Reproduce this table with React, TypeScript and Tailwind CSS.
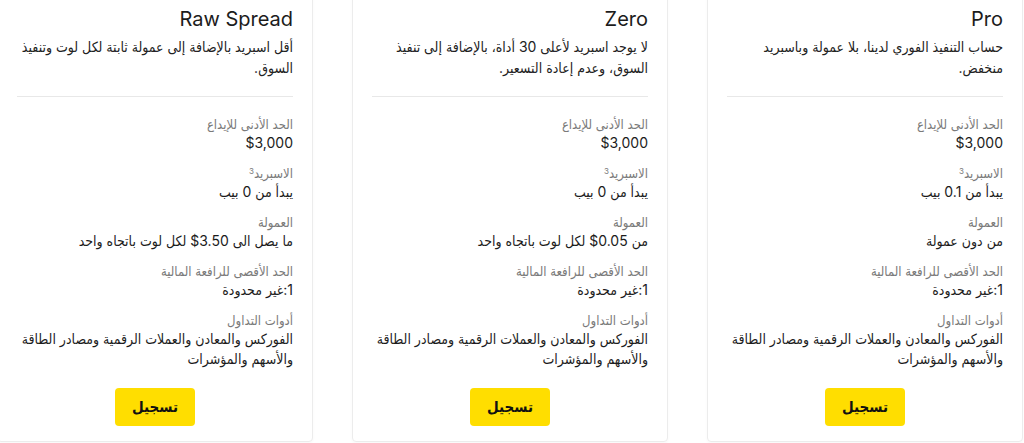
const plans = [
  {
    name: "Pro",
    desc: "حساب التنفيذ الفوري لدينا، بلا عمولة وباسبريد منخفض.",
    spread: "يبدأ من 0.1 بيب",
    commission: "من دون عمولة",
  },
  {
    name: "Zero",
    desc: "لا يوجد اسبريد لأعلى 30 أداة، بالإضافة إلى تنفيذ السوق، وعدم إعادة التسعير.",
    spread: "يبدأ من 0 بيب",
    commission: "من ‎$0.05‎ لكل لوت باتجاه واحد",
  },
  {
    name: "Raw Spread",
    desc: "أقل اسبريد بالإضافة إلى عمولة ثابتة لكل لوت وتنفيذ السوق.",
    spread: "يبدأ من 0 بيب",
    commission: "ما يصل الى ‎$3.50‎ لكل لوت باتجاه واحد",
  },
];

function Row({ label, value, sup }: { label: string; value: string; sup?: string }) {
  return (
    <div>
      <p className="text-[13px] leading-[18px] text-[#7a7a7a]">
        {label}
        {sup && <sup className="text-[8px]">{sup}</sup>}
      </p>
      <p className="text-[14px] leading-[20px] text-[#1c1c1c]">{value}</p>
    </div>
  );
}

export default function App() {
  return (
    <div
      dir="rtl"
      className="w-[1024px] h-[443px] overflow-hidden bg-white flex gap-[39px] pr-[1px]"
      style={{ fontFamily: 'Inter, "DejaVu Sans Condensed", "Noto Sans", sans-serif' }}
    >
      {plans.map((p) => (
        <div
          key={p.name}
          className="w-[316px] shrink-0 -mt-[16px] self-start border border-[#ececec] rounded-[4px] shadow-[0_1px_3px_rgba(0,0,0,0.03)] px-[19px] pt-[20px] pb-[15px] flex flex-col"
        >
          <h3 className="text-[20px] leading-[28px] text-[#1c1c1c]">{p.name}</h3>
          <p className="mt-[3px] text-[14px] leading-[21px] text-[#222]">{p.desc}</p>
          <div className="mt-[18px] h-px bg-[#e8e8e8]" />
          <div className="mt-[18px] flex flex-col gap-[11px]">
            <Row label="الحد الأدنى للإيداع" value="‎$3,000" />
            <Row label="الاسبريد" sup="3" value={p.spread} />
            <Row label="العمولة" value={p.commission} />
            <Row label="الحد الأقصى للرافعة المالية" value="1:غير محدودة" />
            <Row label="أدوات التداول" value="الفوركس والمعادن والعملات الرقمية ومصادر الطاقة والأسهم والمؤشرات" />
          </div>
          <button className="mt-[19px] mx-auto w-[80px] h-[38px] rounded-[4px] bg-[#ffde00] text-[15px] font-bold text-[#111]">
            تسجيل
          </button>
        </div>
      ))}
    </div>
  );
}
